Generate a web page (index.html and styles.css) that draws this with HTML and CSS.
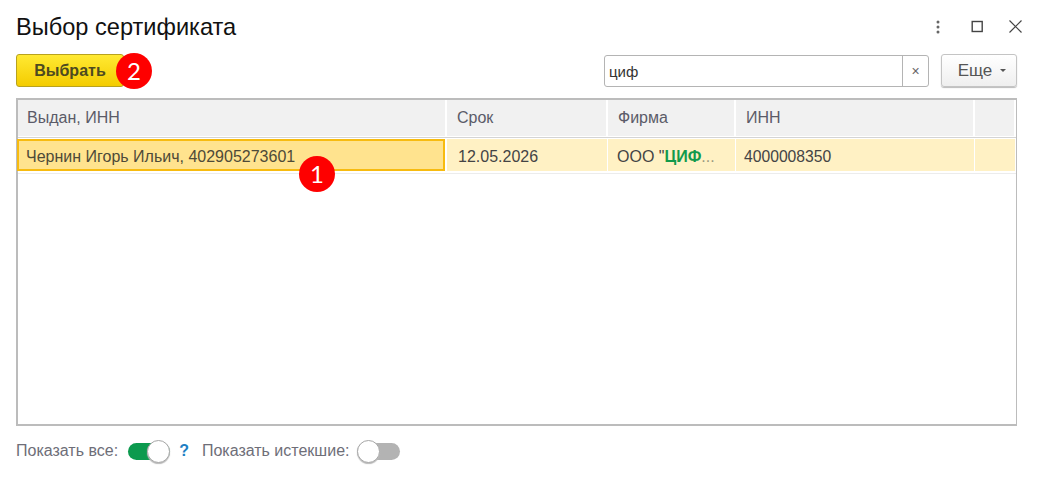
FILE: index.html
```html
<!DOCTYPE html>
<html lang="ru">
<head>
<meta charset="utf-8">
<title>Выбор сертификата</title>
<link rel="stylesheet" href="styles.css">
</head>
<body>
<div class="window">
  <header class="titlebar">
    <h1 class="title">Выбор сертификата</h1>
    <div class="win-actions">
      <svg class="win-icon" width="14" height="16" viewBox="0 0 14 16"><circle cx="7" cy="3" r="1.5" fill="#666"/><circle cx="7" cy="8" r="1.5" fill="#666"/><circle cx="7" cy="13" r="1.5" fill="#666"/></svg>
      <svg class="win-icon" width="14" height="14" viewBox="0 0 14 14"><rect x="3.2" y="1.5" width="10" height="10" fill="none" stroke="#444" stroke-width="1.4"/></svg>
      <svg class="win-icon" width="16" height="16" viewBox="0 0 16 16"><path d="M2.5 1.5 14.5 13.5M14.5 1.5 2.5 13.5" fill="none" stroke="#444" stroke-width="1.2"/></svg>
    </div>
  </header>
  <div class="toolbar">
    <div class="primary-wrap">
      <button class="btn-primary">Выбрать</button>
      <span class="badge badge-two">2</span>
    </div>
    <div class="toolbar-right">
      <div class="search">
        <span class="search-text">циф</span>
        <span class="search-clear">×</span>
      </div>
      <button class="btn-more">Еще<span class="caret"></span></button>
    </div>
  </div>
  <div class="table">
    <div class="row head">
      <div class="cell c1">Выдан, ИНН</div>
      <div class="cell c2">Срок</div>
      <div class="cell c3">Фирма</div>
      <div class="cell c4">ИНН</div>
      <div class="cell c5"></div>
    </div>
    <div class="row data">
      <div class="cell c1 current">Чернин Игорь Ильич, 402905273601</div>
      <div class="cell c2">12.05.2026</div>
      <div class="cell c3 firm">ООО "<b class="match">ЦИФ</b><span class="dots">...</span></div>
      <div class="cell c4 num">4000008350</div>
      <div class="cell c5"></div>
    </div>
    <span class="badge badge-one">1</span>
  </div>
  <div class="footer">
    <span class="label">Показать все:</span>
    <span class="toggle on"><span class="knob"></span></span>
    <span class="help">?</span>
    <span class="label">Показать истекшие:</span>
    <span class="toggle off"><span class="knob"></span></span>
  </div>
</div>
</body>
</html>
```
FILE: styles.css
```css
* { box-sizing: border-box; }
html, body { margin: 0; padding: 0; background: #fff; }
body { width: 1040px; height: 480px; overflow: hidden; font-family: "Liberation Sans", Arial, sans-serif; color: #4a4a4a; }
.window { padding: 0 23px 0 16px; display: flex; flex-direction: column; }
.titlebar { height: 54px; display: flex; align-items: center; justify-content: space-between; }
.title { margin: 0; font-size: 23.6px; font-weight: 400; color: #111; }
.win-actions { display: flex; align-items: center; gap: 24px; margin-right: -6px; }
.win-icon { display: block; }
.toolbar { height: 34px; display: flex; justify-content: space-between; align-items: flex-start; }
.primary-wrap { position: relative; }
.btn-primary { width: 108px; height: 33px; border: 1px solid #b8a21e; border-radius: 3px; background: linear-gradient(#ffe933, #f4cc00); font: 700 16px "Liberation Sans", Arial, sans-serif; color: #4d4a20; padding: 0; }
.badge { position: absolute; width: 36px; height: 36px; border-radius: 50%; background: #fe0000; color: #fff; display: flex; align-items: center; justify-content: center; font-family: Lato, sans-serif; font-size: 24px; line-height: 1; }
.badge-two { left: 100px; top: -1px; }
.badge-one { left: 281px; top: 56px; }
.toolbar-right { display: flex; gap: 12px; align-items: flex-start; }
.search { width: 325px; height: 32px; margin-top: 1px; border: 1px solid #b4b4b4; border-radius: 3px; display: flex; align-items: center; justify-content: space-between; background: #fff; }
.search-text { padding-left: 4px; font-size: 15px; color: #333; }
.search-clear { width: 26px; height: 100%; border-left: 1px solid #b4b4b4; display: flex; align-items: center; justify-content: center; font-size: 14px; color: #666; }
.btn-more { width: 76px; height: 33px; border: 1px solid #c4c4c4; border-radius: 3px; background: linear-gradient(#fff, #efefef); box-shadow: 0 1px 1px #bbb; font: 17px "Liberation Sans", Arial, sans-serif; color: #555; padding: 0 0 0 6px; display: flex; align-items: center; justify-content: center; gap: 8px; }
.caret { width: 0; height: 0; border-left: 3.5px solid transparent; border-right: 3.5px solid transparent; border-top: 3px solid #555; }
.table { position: relative; margin-top: 10px; width: 1001px; height: 328px; border: 2px solid #bcbcbc; border-right-width: 1.5px; background: #fff; font-size: 16px; }
.row { display: flex; }
.cell { display: flex; align-items: center; padding-left: 9px; white-space: nowrap; overflow: hidden; }
.c1 { width: 429px; }
.c2 { width: 161px; }
.c3 { width: 128px; }
.c4 { width: 239px; }
.c5 { flex: 1; }
.head { height: 38px; background: #fff; border-bottom: 1px solid #d4d4d4; color: #5b5b68; }
.head .cell { background: #f1f1f1; border-right: 2px solid #fff; border-bottom: 1px solid #fff; padding-left: 10px; }
.head .cell.c1 { padding-left: 9px; }
.data { height: 36px; padding: 1px 0 2px; background: #fff; border-bottom: 1px solid #ececec; }
.data .cell { background: #fff1c4; border-right: 1px solid #fff; color: #444; padding: 3px 0 0 11px; }
.data .cell.firm { padding-left: 9px; }
.data .cell.num { padding-left: 8px; font-size: 15.7px; }
.data .cell.current { background: #ffe38e; border: 2px solid #f7bb10; padding: 3px 0 0 7px; color: #4e4a38; width: 428px; margin: 0 2px 0 -1px; }
.match { color: #129a4c; font-weight: 700; }
.dots { color: #9a9a80; }
.footer { height: 24px; margin-top: 13px; display: flex; align-items: center; font-size: 16px; color: #6e6e78; }
.toggle { position: relative; display: block; width: 42px; height: 23px; margin-left: 10px; }
.toggle::before { content: ""; position: absolute; top: 3px; height: 17px; border-radius: 8.5px; left: 0; right: 0; }
.toggle.on::before { background: #0c9a4e; }
.toggle.off::before { background: #b3b3b3; }
.knob { position: absolute; top: 0; width: 23px; height: 23px; border-radius: 50%; background: #fff; border: 1px solid #a8a8a8; box-shadow: 0 1px 1px #bbb; }
.toggle.on .knob { right: 0; }
.toggle.off .knob { left: 0; }
.help { margin: 0 13px 0 9px; color: #1e7fc4; font-weight: 700; font-size: 16px; }
.off { margin-left: 8px; width: 43px; }
```
